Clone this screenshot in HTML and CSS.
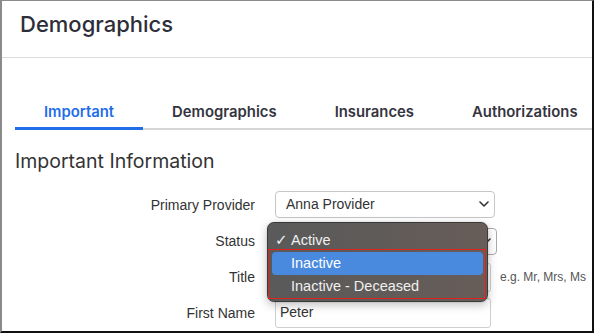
FILE: index.html
```html
<!DOCTYPE html>
<html>
<head>
<meta charset="utf-8">
<link rel="stylesheet" href="styles.css">
</head>
<body>
<div class="frame">
  <header class="page-header">
    <h1 class="page-title">Demographics</h1>
  </header>
  <nav class="tabs">
    <div class="tab active">Important</div>
    <div class="tab">Demographics</div>
    <div class="tab">Insurances</div>
    <div class="tab">Authorizations</div>
  </nav>
  <h2 class="section-title">Important Information</h2>
  <div class="form">
    <label class="label">Primary Provider</label>
    <div class="select select-provider">
      <span>Anna Provider</span>
      <svg class="chev" width="10" height="6" viewBox="0 0 10 6"><path d="M1 1 L5 5 L9 1" fill="none" stroke="#333" stroke-width="1.6" stroke-linecap="round" stroke-linejoin="round"/></svg>
    </div>
    <div></div>

    <label class="label">Status</label>
    <div class="select select-status">
      <span></span>
      <svg class="chev" width="10" height="6" viewBox="0 0 10 6"><path d="M1 1 L5 5 L9 1" fill="none" stroke="#333" stroke-width="1.6" stroke-linecap="round" stroke-linejoin="round"/></svg>
    </div>
    <div></div>

    <label class="label">Title</label>
    <div class="input"></div>
    <div class="hint">e.g. Mr, Mrs, Ms</div>

    <label class="label">First Name</label>
    <div class="input input-last">Peter</div>
    <div></div>
  </div>

  <div class="popup">
    <div class="item"><span class="check">✓</span>Active</div>
    <div class="item selected">Inactive</div>
    <div class="item">Inactive - Deceased</div>
    <div class="mark"></div>
  </div>
</div>
</body>
</html>
```

FILE: styles.css
```css
* { box-sizing: border-box; }
html, body { margin: 0; padding: 0; background: #fff; }
body { width: 594px; height: 333px; overflow: hidden; }

.frame {
  position: relative;
  width: 594px;
  height: 333px;
  overflow: hidden;
  border-left: 2px solid #8a8a8a;
  border-top: 1px solid #8a8a8a;
  border-right: 2px solid #111;
  border-bottom: 2px solid #111;
  font-family: "Liberation Sans", Arial, sans-serif;
  color: #333;
}

.page-header {
  height: 57px;
  border-bottom: 1px solid #dcdcdc;
  padding: 10px 0 0 18px;
}
.page-title {
  margin: 0;
  font-family: Inter, sans-serif;
  font-weight: 500;
  font-size: 22px;
  line-height: 27px;
  color: #2e2e3a;
}

.tabs {
  display: flex;
  flex-wrap: nowrap;
  margin: 34px 0 0 13px;
  border-bottom: 2px solid #d6d6d6;
}
.tab {
  flex: none;
  padding: 11px 29px 6px;
  margin-bottom: -2px;
  border-bottom: 3px solid transparent;
  font-family: Inter, sans-serif;
  font-weight: 600;
  font-size: 14.85px;
  line-height: 18px;
  color: #34343f;
}
.tab.active {
  color: #1f6ee8;
  border-bottom-color: #1f6ee8;
}

.section-title {
  margin: 19px 0 0 13px;
  font-family: Inter, sans-serif;
  font-weight: 400;
  font-size: 19.5px;
  line-height: 24px;
  color: #333;
}

.form {
  display: grid;
  grid-template-columns: 253px auto 1fr;
  grid-auto-rows: 36px;
  column-gap: 20px;
  align-items: center;
  margin-top: 14px;
}
.label {
  text-align: right;
  font-size: 14px;
  color: #333;
}
.select {
  display: flex;
  align-items: center;
  justify-content: space-between;
  height: 27px;
  border: 1px solid #c6c6c6;
  border-radius: 4px;
  padding: 0 5px 0 10px;
  font-size: 14px;
  color: #333;
  background: #fff;
}
.select-provider { width: 220px; margin-top: -2px; }
.select-status { width: 222px; border-color: #aaa; }
.chev { flex: none; }
.input {
  width: 216px;
  height: 29px;
  border: 1px solid #cfcfcf;
  border-radius: 3px;
  padding: 0 4px;
  font-size: 14px;
  line-height: 27px;
  color: #333;
}
.input-last { height: 30px; }
.hint {
  margin-left: -17px;
  font-size: 12px;
  color: #555;
}

.popup {
  position: absolute;
  left: 265px;
  top: 221px;
  width: 221px;
  height: 80px;
  padding: 6px 4px 3px;
  border: 1px solid #3a3a3a;
  border-radius: 7px;
  background: linear-gradient(90deg, #5a5a5a 0%, #5f5b59 50%, #685d58 100%);
  box-shadow: 0 3px 10px rgba(0,0,0,0.25), 0 0 1px rgba(0,0,0,0.4);
}
.item {
  position: relative;
  height: 23px;
  line-height: 23px;
  padding-left: 19px;
  border-radius: 4px;
  font-size: 14.5px;
  color: #f0f0f0;
}
.item.selected {
  background: #4a8ade;
  color: #fff;
}
.check {
  position: absolute;
  left: 3px;
  top: 0;
  font-family: "DejaVu Sans", sans-serif;
  font-size: 15px;
}
.mark {
  position: absolute;
  left: 0;
  top: 26px;
  width: 218px;
  height: 50px;
  border: 1px solid #e3201b;
}
```
